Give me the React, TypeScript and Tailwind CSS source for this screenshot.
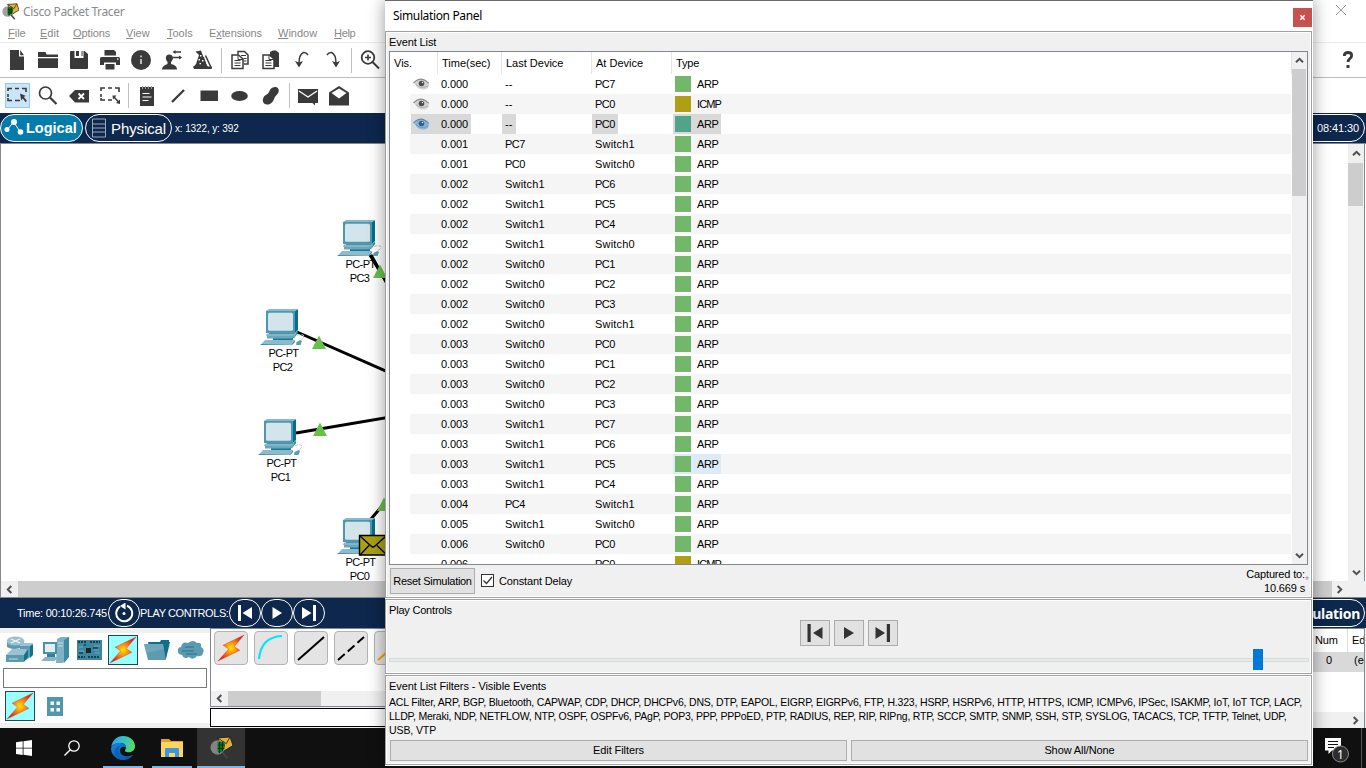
import React from "react";

const Svg = ({ w = 20, h = 20, vb, children, className = "" }: { w?: number; h?: number; vb?: string; children: React.ReactNode; className?: string }) => (
  <svg width={w} height={h} viewBox={vb ?? `0 0 ${w} ${h}`} className={`block shrink-0 ${className}`}>
    {children}
  </svg>
);

const INK = "#3a3a3a";

/* ---------- main toolbar icons ---------- */
const FileIcon = () => (
  <Svg><path fill={INK} d="M3 0h9v6.500h5V20H3z" /><path fill={INK} d="M13.200 0v5.200H17z" /></Svg>
);
const FolderIcon = () => (
  <Svg><path fill={INK} d="M0 2h7.500l1 2.500H20V7H0zM0 8.200h20V18H0z" /></Svg>
);
const SaveIcon = () => (
  <Svg><path fill={INK} d="M1 2q0-1 1-1h3.500V8h9V1h1l3.500 3V18q0 1-1 1H2q-1 0-1-1z" /><path fill={INK} d="M7 1h3V6H7zM12.500 1h1V6h-1z" /></Svg>
);
const PrintIcon = () => (
  <Svg><path fill={INK} d="M4.500 0h9.500l2 2v3.500h-11.500zM1.500 7h17Q20 7 20 8.500V15h-4v-2.500H4V15H0V8.500Q0 7 1.500 7z" /><path fill={INK} d="M5.500 14h9v5.500h-9z" /><rect x="17" y="8.500" width="1.500" height="1.200" fill="#fff" /></Svg>
);
const InfoIcon = () => (
  <Svg><circle cx="10" cy="10" r="10" fill={INK} /><path fill="#ddd" d="M9.200 5.500h1.600v1.700H9.200zM9.200 9h1.600v5H9.200z" /></Svg>
);
const UserIcon = () => (
  <Svg>
    <path fill={INK} d="M0 19.500q0-4 5.500-5.500V12Q3.800 10 3.800 8q0-3.500 3.500-3.500T11 8q0 2-2 4v2q6 1 6 5.500z" />
    <path d="M12 2h7M11 7.500h8" stroke={INK} strokeWidth="1.300" />
    <path fill={INK} d="M10.500 2 13.500 0v4zM20 7.500 17 5.500v4z" />
  </Svg>
);
const WizardIcon = () => (
  <Svg>
    <path fill={INK} d="M2.500 1.500 8 .5l5 13.500 2.500 3.500H0l3-3.500 3-9z" />
    <path d="m12.500 5.500 6 13" stroke={INK} strokeWidth="1.500" />
    <path d="m10.500 7 4 12" stroke={INK} strokeWidth="1" />
    <path fill="#fff" d="M7 5h1.500v1.500H7zM5.500 9H7v1.500H5.500zM9 10h1.500v1.500H9zM6.500 13H8v1.300H6.500z" />
    <path fill={INK} d="M0 16.500h18.500V19H1z" />
  </Svg>
);
const CopyIcon = () => (
  <Svg>
    <path d="M8 4.500V1.500h6.500L18 5v9h-4" fill="#fff" stroke={INK} strokeWidth="1.500" />
    <path d="M11 5.500h5M13.500 8.500h3M13.500 11h3" stroke={INK} />
    <path d="M2 5h6.500L13 9v9.500H2z" fill="#fff" stroke={INK} strokeWidth="1.500" />
    <path d="M8 5v4.500h5" fill="none" stroke={INK} /><path d="M4.500 10.500h6M4.500 13h6M4.500 15.500h6" stroke={INK} strokeWidth="1.200" />
  </Svg>
);
const PasteIcon = () => (
  <Svg>
    <path fill={INK} d="M9 2 12 .5h3L18 3v14h-9z" />
    <path d="M2 5h6.500L13 9v9.500H2z" fill="#fff" stroke={INK} strokeWidth="1.500" />
    <path d="M8 5v4.500h5" fill="none" stroke={INK} /><path d="M4.500 10.500h6M4.500 13h6M4.500 15.500h6" stroke={INK} strokeWidth="1.200" />
  </Svg>
);
const UndoIcon = () => (
  <Svg><path d="M16 5Q14 2 11.500 2.500 7 4 7 14" fill="none" stroke={INK} strokeWidth="1.500" /><path fill={INK} d="m3 11 4 1.500 4-1.500-4 6.500z" /></Svg>
);
const RedoIcon = () => (
  <Svg><path d="M4 5Q6 2 8.500 2.500 13 4 13 14" fill="none" stroke={INK} strokeWidth="1.500" /><path fill={INK} d="m9 11 4 1.500 4-1.500-4 6.500z" /></Svg>
);
const ZoomIcon = () => (
  <Svg><circle cx="8" cy="7.500" r="6.300" fill="none" stroke={INK} strokeWidth="1.800" /><path d="M5 7.500h6M8 4.500v6" stroke={INK} strokeWidth="1.600" /><path d="m12.500 12 6.500 6.500" stroke={INK} strokeWidth="2" /></Svg>
);

/* ---------- editing toolbar icons ---------- */
const SelectIcon = () => (
  <Svg>
    <path d="M1 5V2.500h4M8 2.500h4M15 2.500h4V6M1 8v3M1 12v2.500h4M8 14.500h5" fill="none" stroke={INK} strokeWidth="1.600" />
    <path fill={INK} d="m13 7.500 6 2.500-2.300.8L20 15l-1.500 1-2.700-3.500-1.500 2z" />
  </Svg>
);
const MagnifyIcon = () => (
  <Svg><circle cx="7.500" cy="7" r="6" fill="none" stroke={INK} strokeWidth="1.700" /><path d="m12 11.500 6.500 6.500" stroke={INK} strokeWidth="2.200" /></Svg>
);
const DeleteIcon = () => (
  <Svg><path fill={INK} d="M0 10 6 4h14v12.500H6z" /><path d="m9.500 7.500 5.500 5.500M15 7.500 9.500 13" stroke="#fff" strokeWidth="1.800" /></Svg>
);
const ResizeIcon = () => (
  <Svg>
    <path d="M1 5V2h4M8 2h4M15 2h4V6M1 8v3M1 12v2h4M8 14h4" fill="none" stroke={INK} strokeWidth="1.600" />
    <path d="m14 11 4.500 5" stroke={INK} strokeWidth="1.500" /><path fill={INK} d="M12.500 9.500h4l-3.500 4zM20 18v-4.500L16 17z" />
  </Svg>
);
const NoteIcon = () => (
  <Svg>
    <path fill={INK} d="M3 1h14v19H3z" /><path d="M5.500 7.500h7M5.500 11h9M5.500 14.500h6" stroke="#fff" strokeWidth="1.200" />
    <path d="M5.500 0v3M8.500 0v3M11.500 0v3M14.500 0v3" stroke="#999" />
  </Svg>
);
const LineIcon = () => (<Svg><path d="M4 16 16 4" stroke={INK} strokeWidth="2.300" /></Svg>);
const RectIcon = () => (<Svg><path fill={INK} d="M1.500 4.500h17.500V15H1.500z" /></Svg>);
const EllipseIcon = () => (<Svg><ellipse cx="9.500" cy="10" rx="8.300" ry="5" fill={INK} /></Svg>);
const BlobIcon = () => (<Svg><path fill={INK} d="M13 1.200c4-.6 5.500 2.500 4.500 5-.8 2.300-3 3-4 5.500-1 3.500-3.500 7-7.500 6.800-4-.3-5-4-3.500-7s4-2.500 5.500-5.500 2-4.300 5-4.800z" /></Svg>);
const MailIcon = () => (
  <Svg><path fill={INK} d="M0 3h20v14h-3v2.500l-2.500-2.500H0z" /><path d="m1 5 9 6 9-6" stroke="#fff" fill="none" strokeWidth="1.300" /></Svg>
);
const OpenMailIcon = () => (
  <Svg><path fill={INK} d="M10 0 20 6.500V19.500H0V6.500z" /><path fill="#fff" d="M10 2.500 17.500 7 10 12.500 2.500 7z" /></Svg>
);

const Cell = ({ children }: { children: React.ReactNode }) => <div className="flex w-[31px] shrink-0 items-center justify-center">{children}</div>;
const Sep = () => <div className="flex w-1.5 shrink-0 justify-center"><div className="h-[25px] w-px bg-[#c0c0c0]" /></div>;

/* ---------- logos ---------- */
const TracerLogo = ({ size }: { size: number }) => (
  <Svg w={size} h={size} vb="0 0 24 24">
    <path d="M8 2 21 1l3 9-10 6z" fill="#e3b03c" stroke="#222" strokeWidth="1" /><path d="m8 2 9 6 4-7" fill="none" stroke="#3a2a05" />
    <circle cx="8" cy="12" r="7.500" fill="#8f9391" fillOpacity=".85" />
    <path d="M8 6h7q1.500 6-2 10-3 2-5 1z" fill="#0c7a16" /><path d="M10 6v12M13 6v10M8 9.500h7.500M8 13h7" stroke="#03280a" strokeWidth=".9" />
    <path d="m13 17 5 6" stroke="#444" strokeWidth="2" />
  </Svg>
);

const Bolt = ({ size = 30, id }: { size?: number; id: string }) => (
  <Svg w={size} h={size} vb="0 0 30 30">
    <defs><radialGradient id={id} cx=".5" cy=".5" r=".5"><stop offset="0" stopColor="#ffe600" /><stop offset=".45" stopColor="#ff8a10" /><stop offset="1" stopColor="#e8221c" /></radialGradient></defs>
    <path d="M29 1 6.500 12 12.500 16 1 29 24.500 17.500 18.500 13.500z" fill={`url(#${id})`} stroke="#c93a1a" strokeWidth=".4" />
  </Svg>
);

/* ---------- workspace ---------- */
const Pc = ({ x, y }: { x: number; y: number }) => (
  <g transform={`translate(${x} ${y})`}>
    <path d="M35 2 38 0v21l-3 3z" fill="#00708c" /><path d="M6 2 9 0h29l-3 2z" fill="#8ab8c8" />
    <path d="M6 2h29v22H6z" fill="#4e97ae" /><rect x="8" y="3.700" width="25" height="18" rx="1.500" fill="#d3e4ea" />
    <path d="M9 24h26l3-2v2l-4 5H9z" fill="#0e7a95" /><path d="M7 24.500h27l3-1.500-2 4H6z" fill="#85b4c6" />
    <path d="M13 28h20v3H13z" fill="#117b96" /><path d="M7 27h26l3-2-1 3-3 1.500H7z" fill="#6ba6ba" />
    <path d="M5 31h30l-4 5H0.500z" fill="#8fbacb" /><path d="m31 36 4-5v2l-3 3H1l-.5-1z" fill="#3f8aa3" />
    <path d="m36.500 33 4-2 1.500 1-1.500 4h-4.500z" fill="#5d9db4" /><path d="M37 26.500q6-2 7 .5 0 2-3 3.500" fill="none" stroke="#a8cbd8" strokeDasharray="3 1.500" />
  </g>
);
const Tri = ({ x, y }: { x: number; y: number }) => <path d={`M${x} ${y}l7 13.500h-14z`} fill="#6abf4b" />;

const Label = ({ className, children }: { className: string; children: string }) => (
  <span className={`absolute -translate-x-1/2 text-[11px] leading-[14px] whitespace-nowrap text-black ${className}`}>{children}</span>
);

const Workspace = () => (
  <div className="relative h-[438px] w-full shrink-0 overflow-hidden border-t border-l border-[#828790] bg-white">
    <svg width="385" height="437" viewBox="1 144 385 437" className="absolute top-0 left-0">
      <path d="M370 255 388 285M297 332 388 372M296 433 388 417.500M371 519 388 499" stroke="#000" strokeWidth="3" fill="none" />
      <Pc x={337} y={220} /><Pc x={260} y={309} /><Pc x={258} y={419} /><Pc x={337} y={518} />
      <path d="M371 255 388 285" stroke="#000" strokeWidth="3" />
      <Tri x={380} y={264.500} /><Tri x={319} y={335.500} /><Tri x={320} y={422.500} /><Tri x={384} y={497.500} />
      <path d="M359.500 535.500h28v19.500h-28z" fill="#aba012" stroke="#000" strokeWidth="1.400" />
      <path d="m360 536 11 10q2 2 4 0l11-10M360 555l9-9.500M387 555l-10-9.500" fill="none" stroke="#000" strokeWidth="1.300" />
    </svg>
    <Label className="top-[113px] left-[359.5px] tracking-[-0.6px]">PC-PT</Label>
    <Label className="top-[127px] left-[358.5px] tracking-[-0.7px]">PC3</Label>
    <Label className="top-[202px] left-[282.5px] tracking-[-0.6px]">PC-PT</Label>
    <Label className="top-[216px] left-[281.5px] tracking-[-0.7px]">PC2</Label>
    <Label className="top-[312px] left-[280.5px] tracking-[-0.6px]">PC-PT</Label>
    <Label className="top-[326px] left-[279.5px] tracking-[-0.7px]">PC1</Label>
    <Label className="top-[411px] left-[359.5px] tracking-[-0.6px]">PC-PT</Label>
    <Label className="top-[425px] left-[358.5px] tracking-[-0.7px]">PC0</Label>
    <div className="absolute top-0 right-px flex h-[437px] w-[17px] flex-col border-r border-[#828790] bg-[#f0f0f0]">
      <div className="flex h-[19px] items-center justify-center"><Arrow dir="up" /></div>
      <div className="mr-px h-[43px] bg-[#cdcdcd]" />
      <div className="mt-auto flex h-[18px] items-center justify-center"><Arrow dir="down" /></div>
    </div>
  </div>
);

const Arrow = ({ dir }: { dir: "up" | "down" | "left" | "right" }) => {
  const rot = { up: 0, right: 90, down: 180, left: 270 }[dir];
  return (
    <Svg w={9} h={9}><path transform={`rotate(${rot} 4.500 4.500)`} d="m1 6.300 3.500-3.500L8 6.300" fill="none" stroke="#505050" strokeWidth="2" /></Svg>
  );
};

const Round = ({ children }: { children: React.ReactNode }) => (
  <div className="flex h-[28px] w-[32px] shrink-0 items-center justify-center rounded-[14px] border border-white">{children}</div>
);

/* ---------- device palette icons ---------- */
const RouterIcon = () => (
  <Svg w={30} h={30}>
    <path d="M2 6v6q6 4 17 0V6z" fill="#5b9bb1" /><ellipse cx="10.500" cy="6" rx="8.800" ry="4.500" fill="#9cc2cf" /><path d="m6 4 9 4M15 4 6 8" stroke="#eef6f9" strokeWidth="1.300" />
    <path d="M15 10h10v12l-4 3h-6z" fill="#5b9bb1" /><path d="m15 10 3-2h10l-2 3H15z" fill="#9cc5d2" /><path d="M25 11 28 9v11l-3 3z" fill="#15718a" />
    <path d="M1 20 7 14h15l-3 6z" fill="#9cc2cf" /><path d="M1 20h18v7H1z" fill="#5b9bb1" /><path d="m19 20 4-5v7l-4 5z" fill="#15718a" /><path d="M4 24h9" stroke="#bddbe4" />
  </Svg>
);
const EndIcon = () => (
  <Svg w={30} h={30}>
    <path d="M16 4 20 2h8l-1 21-5 5h-7z" fill="#7fb1c2" /><path d="m23 5 5-3v20l-5 6z" fill="#3c8ba2" /><path d="M17 8h5M17 11h5" stroke="#c7e0e8" />
    <path d="M2 7h14v12H2z" fill="#4a93aa" /><path d="M4 9h10v8H4z" fill="#e2eef2" /><path d="M6 19h8v3H6z" fill="#2f8299" /><path d="M4 22h13l-3 4H0z" fill="#86b6c7" />
  </Svg>
);
const BoardIcon = () => (
  <Svg w={28} h={22}>
    <path d="M1 1h25v20H1z" fill="#3b87a0" /><path d="M2 3h9M14 3h10M2 18h7M12 18h12" stroke="#143e4b" strokeWidth="2" strokeDasharray="2 1" />
    <path d="M10 9h5v5h-5z" fill="#222" /><path d="M18 7h6M18 11h5M3 8h4M3 12h5M19 14h5" stroke="#6faabd" /><path d="M3 14h4M8 6h2M17 9h5" stroke="#12404f" strokeWidth="1.500" />
  </Svg>
);
const PaletteFolder = () => (
  <Svg w={28} h={22}><path d="M5 3h12l1-2h8v2h1l-4 17H8z" fill="#0f7089" /><path d="M1 5h19l3 16H5z" fill="#5d9bb0" /><path d="M1 5h19l1 5L3 14z" fill="#86b4c4" fillOpacity=".5" /></Svg>
);
const CloudIcon = () => (
  <Svg w={28} h={20}><path d="M4 7Q5 1 11 3q5-4 9 0 5-1 4 4 4 2 2 6-1 4-6 3-4 5-8 1-5 3-7-2-5-1-4-5 0-3 3-3z" fill="#5b9bb1" /><path d="M8 7h9M5 11h12M9 14h11" stroke="#2b7188" strokeWidth="1.200" /></Svg>
);

const Tile = ({ children }: { children: React.ReactNode }) => (
  <div className="flex size-[34px] shrink-0 items-center justify-center overflow-hidden rounded-[4px] border border-[#b4b4b4] bg-[#e4e4e4]">{children}</div>
);

const TopBars = () => (
  <>
    <div className="flex h-[22px] shrink-0 items-center pt-px pl-[2px] font-['Noto_Sans']">
      <div className="-mt-px"><TracerLogo size={17} /></div>
      <span className="ml-1 text-[12px] tracking-[-0.35px] text-[#8a8a8a]">Cisco Packet Tracer</span>
      <Svg w={12} h={12} className="mt-[-3px] ml-auto mr-[19px]"><path d="m1 1 10 10M11 1 1 11" stroke="#999" /></Svg>
    </div>
    <div className="flex h-[21px] shrink-0 items-center border-b border-[#ececec] pt-[2px] pl-2 text-[11px] text-[#888]">
      <span className="w-8"><u>F</u>ile</span>
      <span className="w-[33px]"><u>E</u>dit</span>
      <span className="w-[53px] tracking-[-0.1px]"><u>O</u>ptions</span>
      <span className="w-[41px]"><u>V</u>iew</span>
      <span className="w-[42px]"><u>T</u>ools</span>
      <span className="w-[69px] tracking-[-0.1px]">E<u>x</u>tensions</span>
      <span className="w-14"><u>W</u>indow</span>
      <span className="tracking-[-0.3px]"><u>H</u>elp</span>
    </div>
    <div className="flex h-[35px] shrink-0 items-stretch border-b border-[#bdbdbd] pl-[1px]">
      <Cell><FileIcon /></Cell><Cell><FolderIcon /></Cell><Cell><SaveIcon /></Cell><Cell><PrintIcon /></Cell><Cell><InfoIcon /></Cell><Cell><UserIcon /></Cell><Cell><WizardIcon /></Cell>
      <div className="flex items-center"><Sep /></div>
      <Cell><CopyIcon /></Cell><Cell><PasteIcon /></Cell><Cell><UndoIcon /></Cell><Cell><RedoIcon /></Cell>
      <div className="flex items-center"><Sep /></div>
      <Cell><ZoomIcon /></Cell>
      <Svg w={12} h={20} className="mt-[7px] mr-[12px] ml-auto"><path d="M2.300 6q0-3.500 3.700-3.500t3.700 3c0 3-3.700 3-3.700 6.500" fill="none" stroke={INK} strokeWidth="2.800" /><path fill={INK} d="M4.500 15h3v3h-3z" /></Svg>
    </div>
    <div className="flex h-[35px] shrink-0 items-stretch pl-[1px]">
      <Cell><div className="ml-px flex size-[25px] items-center justify-center border border-[#90c8f6] bg-[#cce4f7]"><SelectIcon /></div></Cell>
      <Cell><MagnifyIcon /></Cell><Cell><DeleteIcon /></Cell><Cell><ResizeIcon /></Cell>
      <div className="flex items-center"><Sep /></div>
      <Cell><NoteIcon /></Cell><Cell><LineIcon /></Cell><Cell><RectIcon /></Cell><Cell><EllipseIcon /></Cell><Cell><BlobIcon /></Cell>
      <div className="flex items-center"><Sep /></div>
      <Cell><MailIcon /></Cell><Cell><OpenMailIcon /></Cell>
    </div>
    <div className="flex h-[30px] shrink-0 items-center bg-[#0e274d] text-white">
      <div className="flex h-[28px] w-[83px] items-center rounded-[14px] border border-white bg-[#047cab] pl-[3px]">
        <Svg w={20} h={20}><path d="m3 12 6.500-8 7 10" stroke="#fff" fill="none" strokeWidth="1" /><circle cx="3" cy="11.500" r="2.500" fill="#fff" /><circle cx="10" cy="4" r="3" fill="#fff" /><circle cx="16.500" cy="14" r="2.800" fill="#fff" /></Svg>
        <span className="ml-[2px] pt-px text-[14.5px] font-bold">Logical</span>
      </div>
      <div className="ml-[2px] flex h-[28px] w-[87px] items-center rounded-[14px] border border-white pl-[6px]">
        <Svg w={14} h={20}><path d="M.5 1h13v18H.5zM1 6h12M1 10h12M1 14h12" stroke="#9aa8be" fill="none" /></Svg>
        <span className="ml-[5px] pt-[2px] text-[15px] tracking-[-0.1px]">Physical</span>
      </div>
      <span className="ml-[3px] text-[10px] tracking-[-0.13px]">x: 1322, y: 392</span>
      <div className="ml-auto mr-px flex h-[28px] w-[80px] items-center justify-end rounded-[14px] border border-white pr-[5px] text-[11px] tracking-[-0.1px]">08:41:30</div>
    </div>
  </>
);

const BottomArea = () => (
  <>
    <div className="flex h-[17px] shrink-0 items-center border-b border-l border-[#828790] bg-[#cdcdcd]">
      <div className="flex h-full w-[17px] items-center justify-center bg-[#f0f0f0]"><Arrow dir="left" /></div>
      <div className="ml-auto flex h-full w-[34px] items-center bg-[#f0f0f0] pl-[3px]"><Arrow dir="right" /></div>
    </div>
    <div className="flex h-[30px] shrink-0 items-center bg-[#0e274d] text-[11px] text-white">
      <span className="w-[91px] shrink-0 pl-[17px] tracking-[-0.25px] whitespace-nowrap">Time: 00:10:26.745</span>
      <div className="ml-[17px]"><Round><Svg w={20} h={20}><path d="M6 3.500A8 8 0 1 0 13 2.800" fill="none" stroke="#fff" strokeWidth="2" /><path fill="#fff" d="M6 3 11.500-.5v7z" /><circle cx="10" cy="10.500" r="1.500" fill="#fff" /></Svg></Round></div>
      <span className="w-[89px] shrink-0 tracking-[-0.42px] whitespace-nowrap">PLAY CONTROLS:</span>
      <Round><Svg w={16} h={18}><path fill="#fff" d="M1 1h3v16H1zM15 3v12L5.500 9z" /></Svg></Round>
      <Round><Svg w={12} h={14}><path fill="#fff" d="M1.500 1v12L11 7z" /></Svg></Round>
      <Round><Svg w={16} h={18}><path fill="#fff" d="M12 1h3v16h-3zM1 3v12l9.500-6z" /></Svg></Round>
      <div className="mr-px ml-auto flex h-[28px] w-[110px] items-center justify-end rounded-[14px] border border-white pr-1 font-['Noto_Sans'] text-[14px] font-bold tracking-[-0.3px]">Simulation</div>
    </div>
    <div className="flex h-[100px] shrink-0 bg-[#f0f0f0]">
      <div className="w-[210px] shrink-0 py-[5px]">
        <div className="h-[90px] bg-white">
          <div className="flex h-[33px] items-center pl-[5px]">
            <RouterIcon />
            <div className="ml-[6px]"><EndIcon /></div>
            <div className="ml-[5px]"><BoardIcon /></div>
            <div className="ml-[4px] border border-[#1b4b55] bg-[#99ffff]"><Bolt size={28} id="b1" /></div>
            <div className="ml-[5px]"><PaletteFolder /></div>
            <div className="ml-[6px]"><CloudIcon /></div>
          </div>
          <div className="mt-[2px] ml-[3px] h-[20px] w-[204px] border border-[#7a7a7a] bg-white" />
          <div className="flex items-center pt-[3px] pl-[5px]">
            <div className="border border-[#1b4b55] bg-[#99ffff]"><Bolt size={28} id="b2" /></div>
            <Svg w={16} h={19} className="ml-3"><path d="M0 0h16v19H0z" fill="#4f97af" /><path d="M3.500 4.500h3.500v3.500H3.500zM9.500 4.500h3.500v3.500H9.500zM3.500 11h3.500v3.500H3.500zM9.500 11h3.500v3.500H9.500z" fill="#fff" /></Svg>
          </div>
        </div>
      </div>
      <div className="flex w-[1103px] shrink-0 flex-col">
        <div className="flex h-[79px] flex-col border-t border-l border-[#828790] border-b bg-white">
          <div className="flex gap-[6px] pt-[2px] pl-[2.5px]">
            <Tile><Bolt size={28} id="b3" /></Tile>
            <Tile><Svg w={30} h={30}><path d="M3 26Q5 4 26 3" fill="none" stroke="#00e8ff" strokeWidth="2.200" /></Svg></Tile>
            <Tile><Svg w={30} h={30}><path d="M2 27 28 4" stroke="#000" strokeWidth="2" /></Svg></Tile>
            <Tile><Svg w={30} h={30}><path d="M2 27 28 4" stroke="#000" strokeWidth="2" strokeDasharray="9 4" /></Svg></Tile>
            <Tile><Svg w={30} h={30}><path d="M2 27 28 4" stroke="#ff9c00" strokeWidth="2" /></Svg></Tile>
          </div>
          <div className="mt-auto flex h-[15px] bg-[#f0f0f0]">
            <div className="flex w-[17px] items-center justify-center"><Arrow dir="left" /></div>
            <div className="w-[93px] bg-[#cdcdcd]" />
          </div>
        </div>
        <div className="mt-px mb-[1px] h-[19px] border border-black bg-white" />
      </div>
      <div className="flex w-[52px] shrink-0 flex-col overflow-hidden border-t border-r border-[#828790] bg-white text-[11px]">
        <div className="flex h-[23px] items-center overflow-hidden whitespace-nowrap">
          <span className="w-[35px] shrink-0 border-r border-[#dcdcdc] pl-[2px] leading-[23px] tracking-[-0.2px]">Num</span>
          <span className="shrink-0 pl-[4px]">Edit</span>
        </div>
        <div className="flex h-5 items-center overflow-hidden bg-[#d9d9d9] pb-1 whitespace-nowrap">
          <span className="w-[34px] shrink-0 pl-[13px]">0</span>
          <span className="shrink-0 pl-[7px]">(edit)</span>
        </div>
        <div className="mt-auto flex h-4 items-center bg-[#f0f0f0] pl-[38px]"><Arrow dir="right" /></div>
      </div>
    </div>
    <div className="flex h-10 shrink-0 bg-[#101010]">
      <div className="flex w-12 items-center justify-center"><Svg w={16} h={16}><path fill="#fff" d="M0 2.200 6.700 1.300v6.400H0zM7.500 1.200 16 0v7.700H7.500zM0 8.500h6.700V15L0 14.100zM7.500 8.500H16V16l-8.500-1.200z" /></Svg></div>
      <div className="flex w-12 items-center justify-center"><Svg w={16} h={16}><circle cx="10" cy="6" r="5.200" fill="none" stroke="#fff" strokeWidth="1.300" /><path d="M6.300 9.700.5 15.500" stroke="#fff" strokeWidth="1.400" /></Svg></div>
      <div className="ml-[7px] flex w-10 items-center justify-center border-b-2 border-[#76b9ed] pt-[2px]">
        <Svg w={24} h={24}>
          <defs>
            <linearGradient id="eg" x1="0" x2="1" y1=".3" y2=".5"><stop offset="0" stopColor="#2aa4e6" /><stop offset=".5" stopColor="#33c2c9" /><stop offset="1" stopColor="#5fd95a" /></linearGradient>
            <linearGradient id="eb" x1="0" x2="1" y1="0" y2="1"><stop offset="0" stopColor="#1b86dd" /><stop offset="1" stopColor="#0c4fa0" /></linearGradient>
          </defs>
          <path d="M.2 11C1 4.500 6 0 12 0c7 0 12 4.800 12 10 0 4-3 6.300-6.500 6.300-2.500 0-4.200-1-3.300-2.300 1.800-3 .2-7-4.200-7C5 7 1 9 .2 11z" fill="url(#eg)" />
          <path d="M.1 12C1 8.500 5 6.800 9.500 7c3.500.2 5.500 2.500 5.600 4.500C12 9.500 9 11.500 9 14.500c0 4 4 6.500 9 5.500 2-.5 3.500-1.300 4-1-2 3.300-6 5-10 5C5 24-.4 18 .1 12z" fill="url(#eb)" />
          <path d="M9.500 9.800C7 12 6.500 18 10.500 21.500c2 1.500 4 2.200 5 2-6 1.500-11.500-1.500-12-6.500-.2-4 3-7 6-7.200z" fill="#0b62b8" />
        </Svg>
      </div>
      <div className="ml-[9px] flex w-10 items-center justify-center border-b-2 border-[#76b9ed] pt-[2px]">
        <Svg w={22} h={20}><path d="M0 1h8l2 2h12v16H0z" fill="#e5a50d" /><path d="M0 4h22v15H0z" fill="#fcd462" /><path d="M4 11q0-1 1-1h12q1 0 1 1v8h-4v-4H8v4H4z" fill="#3d97dc" /></Svg>
      </div>
      <div className="ml-[5px] flex w-12 items-center justify-center border-b-2 border-[#76b9ed] bg-[#333]"><TracerLogo size={23} /></div>
      <div className="ml-auto flex items-center">
        <Svg w={28} h={28} className="mt-[3px]">
          <path fill="#fff" d="M2 2h16v12.500H9L5.500 18v-3.500H2z" /><path d="M5 5.500h10M5 8.500h10M5 11.500h6" stroke="#101010" />
          <circle cx="17.500" cy="18" r="8" fill="#2c2c2c" stroke="#8a8a8a" /><text x="17.500" y="22.500" textAnchor="middle" fontSize="12" fill="#fff" fontFamily="Noto Sans">1</text>
        </Svg>
        <div className="ml-[10px] h-10 w-px bg-[#555]" /><div className="w-1" />
      </div>
    </div>
  </>
);

/* ---------- simulation panel ---------- */
const rows: [string, string, string, string][] = [
  ["0.000", "--", "PC7", "ARP"], ["0.000", "--", "PC0", "ICMP"], ["0.000", "--", "PC0", "ARP"],
  ["0.001", "PC7", "Switch1", "ARP"], ["0.001", "PC0", "Switch0", "ARP"], ["0.002", "Switch1", "PC6", "ARP"],
  ["0.002", "Switch1", "PC5", "ARP"], ["0.002", "Switch1", "PC4", "ARP"], ["0.002", "Switch1", "Switch0", "ARP"],
  ["0.002", "Switch0", "PC1", "ARP"], ["0.002", "Switch0", "PC2", "ARP"], ["0.002", "Switch0", "PC3", "ARP"],
  ["0.002", "Switch0", "Switch1", "ARP"], ["0.003", "Switch0", "PC0", "ARP"], ["0.003", "Switch0", "PC1", "ARP"],
  ["0.003", "Switch0", "PC2", "ARP"], ["0.003", "Switch0", "PC3", "ARP"], ["0.003", "Switch1", "PC7", "ARP"],
  ["0.003", "Switch1", "PC6", "ARP"], ["0.003", "Switch1", "PC5", "ARP"], ["0.003", "Switch1", "PC4", "ARP"],
  ["0.004", "PC4", "Switch1", "ARP"], ["0.005", "Switch1", "Switch0", "ARP"], ["0.006", "Switch0", "PC0", "ARP"],
  ["0.006", "", "PC0", "ICMP"],
];

const Eye = ({ blue }: { blue: boolean }) => (
  <Svg w={17} h={13}>
    <path d="M1 5Q7-1 13 2.500q3 2 3 4.500-.5 3.500-4 4.500-6 .5-8.500-3z" fill={blue ? "#8db4d6" : "#d4d4d4"} />
    <path d="M.5 5Q7-1.500 13 3q2 2 3 2" fill="none" stroke={blue ? "#5a8db5" : "#8c8c8c"} strokeWidth="1.100" />
    <path d="M3 6.500q3 3 6 3T15 8" fill="none" stroke={blue ? "#6a9cc5" : "#b0b0b0"} />
    <circle cx="8.500" cy="5.500" r="2.800" fill={blue ? "#2d628e" : "#4c4c4c"} /><circle cx="9.500" cy="4.500" r=".8" fill="#ddd" />
  </Svg>
);

const cellText = (t: string) => (t.startsWith("PC") ? "tracking-[-0.5px]" : t.startsWith("Sw") ? "tracking-[0.2px]" : "");

const Row = ({ r, i }: { r: [string, string, string, string]; i: number }) => {
  const sel = i === 2;
  const hl = sel ? "bg-[#d9d9d9]" : "";
  const color = sel ? "bg-[#51a38a]" : r[3] === "ICMP" ? "bg-[#ae9f14]" : "bg-[#73b76b]";
  return (
    <div className={`ml-5 flex h-5 w-[881px] shrink-0 items-center ${i % 2 ? "bg-[#f5f5f5]" : "bg-white"}`}>
      <div className={`ml-px flex h-5 w-[60px] items-center pl-[2px] ${hl}`}>
        <div className="w-[28px]">{i < 3 && <Eye blue={sel} />}</div>
        <span className="tracking-[-0.1px]">{r[0]}</span>
      </div>
      <div className="ml-[31px] flex w-[90px]"><span className={`-mr-1 h-5 pr-1 pl-[3px] leading-5 ${cellText(r[1])} ${hl}`}>{r[1]}</span></div>
      <div className="flex w-[81px]"><span className={`h-5 pr-[3px] pl-[3px] leading-5 ${cellText(r[2])} ${hl}`}>{r[2]}</span></div>
      <div className={`flex h-5 w-12 items-center pl-[2px] ${i === 19 ? "bg-[#dcebf7]" : hl}`}>
        <div className={`size-4 shrink-0 ${color}`} />
        <span className={`ml-[6px] ${r[3] === "ICMP" ? "tracking-[-0.9px]" : "tracking-[-0.4px]"}`}>{r[3]}</span>
      </div>
    </div>
  );
};

const Button = ({ className, children }: { className: string; children: React.ReactNode }) => (
  <button className={`flex shrink-0 items-center justify-center border border-[#adadad] bg-[#e1e1e1] whitespace-nowrap ${className}`}>{children}</button>
);

const Group = ({ className, children }: { className: string; children: React.ReactNode }) => (
  <section className={`flex shrink-0 flex-col border border-[#a0a0a0] bg-[#f0f0f0] ring-1 ring-white ring-inset ${className}`}>{children}</section>
);

const SimulationPanel = () => (
  <div className="absolute top-0 left-[385px] flex h-[766px] w-[928px] flex-col border-t border-[#6b6b6b] bg-white text-[11px] text-black shadow-[0_0_16px_rgba(0,0,0,0.4)]">
    <div className="flex h-[30px] shrink-0 items-center pl-2">
      <span className="font-['Noto_Sans'] text-[12px] tracking-[-0.36px]">Simulation Panel</span>
      <div className="mt-[3px] mr-px ml-auto flex h-[19px] w-[19px] items-center justify-center bg-[#c75050]">
        <Svg w={7} h={7}><path d="m1.300 1.300 4.400 4.400M5.700 1.300 1.300 5.700" stroke="#fff" strokeWidth="1.500" /></Svg>
      </div>
    </div>
    <Group className="h-[567px] w-[927px] pr-[3px] pl-[3px]">
      <div className="h-[19px] shrink-0 leading-[20px] tracking-[-0.1px]">Event List</div>
      <div className="flex h-[514px] shrink-0 border border-[#828790] bg-white">
        <div className="flex w-[902px] shrink-0 flex-col overflow-hidden">
          <div className="flex h-[22px] shrink-0 items-stretch leading-[22px]">
            <div className="w-[48px] border-r border-[#e5e5e5] pl-1">Vis.</div>
            <div className="w-[64px] border-r border-[#e5e5e5] pl-1">Time(sec)</div>
            <div className="w-[90px] border-r border-[#e5e5e5] pl-1">Last Device</div>
            <div className="w-[80px] border-r border-[#e5e5e5] pl-1">At Device</div>
            <div className="flex-1 border-r border-[#e5e5e5] pl-1 tracking-[-0.2px]">Type</div>
          </div>
          {rows.map((r, i) => <Row key={i} r={r} i={i} />)}
        </div>
        <div className="flex w-4 flex-col bg-[#f0f0f0]">
          <div className="flex h-[17px] items-center justify-center"><Arrow dir="up" /></div>
          <div className="mr-px h-[127px] bg-[#cdcdcd]" />
          <div className="mt-auto flex h-[17px] items-center justify-center"><Arrow dir="down" /></div>
        </div>
      </div>
      <div className="flex pt-[3px] pl-px">
        <Button className="h-[26px] w-[85px] tracking-[-0.3px]">Reset Simulation</Button>
        <div className="mt-[6px] ml-[6px] flex size-[13px] items-center justify-center border border-[#333] bg-white">
          <Svg w={11} h={11}><path d="m1.500 5.500 3 3L10 2" fill="none" stroke="#333" strokeWidth="1.300" /></Svg>
        </div>
        <span className="ml-[5px] pt-[6px] leading-[14px] tracking-[-0.15px]">Constant Delay</span>
        <div className="mt-[-1px] ml-auto text-right leading-[14px] tracking-[-0.15px]">Captured to:<br />10.669 s</div>
        <span className="w-[3px] pt-[6px] text-[10px] leading-[14px] text-[#8e96b8]">*</span>
      </div>
    </Group>
    <Group className="mt-px h-[75px] w-[927px] pr-[1px] pl-[3px]">
      <div className="h-5 pt-[2px] leading-[16px] tracking-[-0.2px]">Play Controls</div>
      <div className="flex gap-1 pl-[411px]">
        <Button className="h-[26px] w-[30px]"><Svg w={16} h={18}><path fill="#333" d="M.5 0h3.200v18H.5zM15.500 3v12L6 9z" /></Svg></Button>
        <Button className="h-[26px] w-[30px]"><Svg w={12} h={14}><path fill="#333" d="M1 1v12L11 7z" /></Svg></Button>
        <Button className="h-[26px] w-[30px]"><Svg w={16} h={18}><path fill="#333" d="M11.800 0h3.200v18h-3.200zM.500 3v12l9.500-6z" /></Svg></Button>
      </div>
      <div className="mt-[3px] flex h-[21px] items-center">
        <div className="h-1 w-[864px] border border-r-0 border-[#d6dada] bg-[#e7eaea]" />
        <div className="h-[21px] w-[10px] bg-[#0078d7]" />
        <div className="h-1 w-[46px] border border-l-0 border-[#d6dada] bg-[#e7eaea]" />
      </div>
    </Group>
    <Group className="mt-px h-[90px] w-[927px] pr-[3px] pl-[3px]">
      <div className="h-[19px] shrink-0 pt-[3px] leading-[14px] tracking-[-0.08px]">Event List Filters - Visible Events</div>
      <div className="text-[10.5px] leading-[14px] whitespace-nowrap">
        <p className="tracking-[-0.184px]">ACL Filter, ARP, BGP, Bluetooth, CAPWAP, CDP, DHCP, DHCPv6, DNS, DTP, EAPOL, EIGRP, EIGRPv6, FTP, H.323, HSRP, HSRPv6, HTTP, HTTPS, ICMP, ICMPv6, IPSec, ISAKMP, IoT, IoT TCP, LACP,</p>
        <p className="tracking-[-0.22px]">LLDP, Meraki, NDP, NETFLOW, NTP, OSPF, OSPFv6, PAgP, POP3, PPP, PPPoED, PTP, RADIUS, REP, RIP, RIPng, RTP, SCCP, SMTP, SNMP, SSH, STP, SYSLOG, TACACS, TCP, TFTP, Telnet, UDP,</p>
        <p className="tracking-[-0.1px]">USB, VTP</p>
      </div>
      <div className="mt-[3px] flex gap-1 pl-px tracking-[-0.1px]">
        <Button className="h-[21px] w-[457px]">Edit Filters</Button>
        <Button className="h-[21px] w-[457px]">Show All/None</Button>
      </div>
    </Group>
  </div>
);

export default function App() {
  return (
    <div className="relative flex h-[768px] w-[1366px] flex-col overflow-hidden bg-white font-['Liberation_Sans',Arial,sans-serif]">
      <TopBars />
      <Workspace />
      <BottomArea />
      <SimulationPanel />
    </div>
  );
}
